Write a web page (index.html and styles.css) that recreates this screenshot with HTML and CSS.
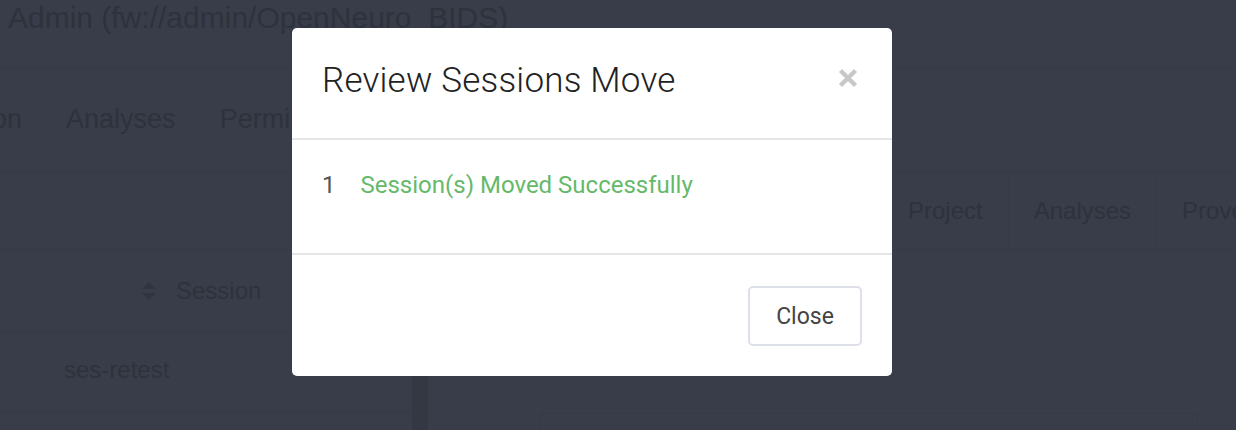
FILE: index.html
```html
<!DOCTYPE html>
<html lang="en">
<head>
  <meta charset="UTF-8" />
  <title>Review Sessions Move</title>
  <link rel="stylesheet" href="styles.css">
</head>
<body>
  <!-- Pagina de fondo (queda bajo el backdrop) -->
  <div class="page">
    <h1 class="page-title">Admin (fw://admin/OpenNeuro_BIDS)</h1>
    <nav class="tabs">
      <span class="tab">Session</span>
      <span class="tab">Analyses</span>
      <span class="tab">Permissions</span>
    </nav>
    <div class="workspace">
      <section class="left-panel">
        <div class="row filter-row"></div>
        <div class="row head-row">
          <svg class="sort-icon" width="16" height="20" viewBox="0 0 16 20">
            <path d="M8 1 L15 8 H1 Z M8 19 L15 12 H1 Z" fill="#30343e"/>
          </svg>
          <span>Session</span>
        </div>
        <div class="row data-row">ses-retest</div>
      </section>
      <div class="gutter"></div>
      <section class="right-panel">
        <div class="sub-tabs">
          <span class="sub-tab first">Project</span>
          <span class="sub-tab">Analyses</span>
          <span class="sub-tab">Provenance</span>
        </div>
        <div class="sub-line"></div>
        <div class="box"></div>
      </section>
    </div>
  </div>

  <!-- Modal -->
  <div class="modal">
    <div class="modal-content">
      <div class="modal-header">
        <h2 class="modal-title">Review Sessions Move</h2>
        <button class="close" aria-label="Close">
          <svg width="20" height="20" viewBox="0 0 20 20">
            <path d="M2.5 2.5 L17.5 17.5 M17.5 2.5 L2.5 17.5" stroke="#c8c8c8" stroke-width="4.4"/>
          </svg>
        </button>
      </div>
      <div class="modal-body">
        <span class="count">1</span>
        <span class="success">Session(s) Moved Successfully</span>
      </div>
      <div class="modal-footer">
        <button class="btn">Close</button>
      </div>
    </div>
  </div>
</body>
</html>
```

FILE: styles.css
```css
/* Fondo oscuro: la app detras del backdrop */
body {
  margin: 0;
  height: 430px;
  overflow: hidden;
  background: #383d49;
  font-family: 'Liberation Sans', Arial, sans-serif;
  color: #2e323c;
}

.page-title {
  margin: 0;
  padding-left: 8px;
  height: 68px;
  font-size: 30px;
  line-height: 36px;
  font-weight: normal;
  border-bottom: 1px solid #343945;
  box-sizing: border-box;
}

.tabs {
  display: flex;
  height: 104px;
  align-items: center;
  margin-left: -96px;
  font-size: 27px;
  border-bottom: 1px solid #343945;
  box-sizing: border-box;
}

.tab {
  padding: 0 22px;
}

.workspace {
  display: flex;
}

.left-panel {
  width: 412px;
  flex-shrink: 0;
}

.row {
  border-bottom: 1px solid #343945;
  box-sizing: border-box;
  display: flex;
  align-items: center;
  font-size: 24px;
}

.filter-row {
  height: 78px;
}

.head-row {
  height: 82px;
  padding-left: 141px;
  gap: 19px;
}

.data-row {
  height: 80px;
  padding: 0 0 4px 64px;
}

.gutter {
  width: 16px;
  height: 258px;
  flex-shrink: 0;
  background: #343843;
}

.right-panel {
  flex: 1;
  min-width: 0;
  padding-left: 29px;
}

.sub-tabs {
  display: flex;
  height: 78px;
  padding-left: 426px;
  align-items: center;
  font-size: 24px;
  white-space: nowrap;
  border-bottom: 1px solid #343945;
  box-sizing: border-box;
}

.sub-tab {
  height: 100%;
  display: flex;
  align-items: center;
  padding: 0 25px;
  border-left: 1px solid #353a46;
}

.sub-tab.first {
  border-left: none;
}

.sub-line {
  height: 23px;
  border-bottom: 1px solid #363b47;
}

.box {
  margin: 139px 38px 0 83px;
  height: 16px;
  border: 1px solid #353a46;
  border-bottom: none;
  border-radius: 4px 4px 0 0;
}

/* Modal */
.modal {
  position: fixed;
  top: 0;
  left: 0;
  right: 0;
  bottom: 0;
  padding: 28px 0 0 292px;
}

.modal-content {
  width: 600px;
  background: #fff;
  border-radius: 5px;
  font-family: Roboto, 'Liberation Sans', sans-serif;
}

.modal-header {
  height: 112px;
  box-sizing: border-box;
  padding: 32px 30px 0;
  display: flex;
  align-items: flex-start;
  justify-content: space-between;
  border-bottom: 2px solid #e5e5e5;
}

.modal-title {
  margin: 0;
  font-size: 35px;
  font-weight: 300;
  color: #222;
  letter-spacing: 0.2px;
}

.close {
  border: none;
  background: none;
  padding: 0;
  margin: 8px 4px 0 0;
  display: flex;
}

.modal-body {
  height: 115px;
  box-sizing: border-box;
  padding: 0 30px 24px;
  display: flex;
  align-items: center;
  gap: 25px;
  font-size: 24px;
  border-bottom: 2px solid #e5e5e5;
}

.count {
  color: #555;
}

.success {
  color: #66b96a;
}

.modal-footer {
  height: 121px;
  box-sizing: border-box;
  padding: 31px 30px 0;
  display: flex;
  justify-content: flex-end;
  align-items: flex-start;
}

.btn {
  width: 114px;
  height: 60px;
  background: #fff;
  border: 2px solid #dde0e8;
  border-radius: 5px;
  font-family: Roboto, 'Liberation Sans', sans-serif;
  font-size: 23px;
  color: #444;
}
```
